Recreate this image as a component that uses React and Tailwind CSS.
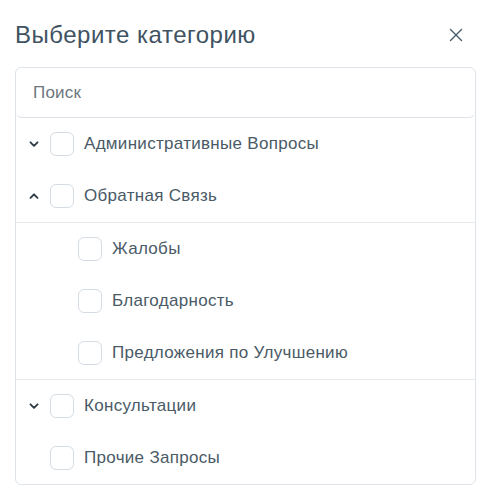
import { useState } from 'react';

const categories = [
  { id: 'admin', label: 'Административные Вопросы', children: [] , collapsible: true },
  {
    id: 'feedback',
    label: 'Обратная Связь',
    collapsible: true,
    children: ['Жалобы', 'Благодарность', 'Предложения по Улучшению'],
  },
  { id: 'consult', label: 'Консультации', children: [], collapsible: true },
  { id: 'other', label: 'Прочие Запросы', children: [], collapsible: false },
];

function Chevron({ up }) {
  return (
    <svg width="10" height="10" viewBox="0 0 10 10" className="text-[#2f3b45]">
      <path
        d={up ? 'M1.5 6.8 L5 3.3 L8.5 6.8' : 'M1.5 3.3 L5 6.8 L8.5 3.3'}
        fill="none"
        stroke="currentColor"
        strokeWidth="1.9"
        strokeLinecap="round"
        strokeLinejoin="round"
      />
    </svg>
  );
}

function Box() {
  return <span className="block w-6 h-6 shrink-0 rounded-[6px] border border-[#d5dce3] bg-white" />;
}

export default function App() {
  const [open] = useState({ feedback: true });

  return (
    <div className="w-[491px] h-[502px] bg-white" style={{ fontFamily: '"Liberation Sans", Arial, sans-serif' }}>
      <div className="flex items-center justify-between pl-[15px] pr-[28px] pt-[3px] h-[67px]">
        <h2 className="text-[24px] tracking-[0.5px] text-[#3f5362] leading-none">Выберите категорию</h2>
        <svg width="14" height="14" viewBox="0 0 14 14" className="text-[#4a5c6a]">
          <path d="M1.5 1.5 L12.5 12.5 M12.5 1.5 L1.5 12.5" stroke="currentColor" strokeWidth="1.4" strokeLinecap="round" />
        </svg>
      </div>

      <div className="mx-[15px] rounded-[6px] border border-[#dde3e9] overflow-hidden">
        <div className="h-[50px] rounded-[6px] border-b border-[#dde3e9] flex items-center px-[17px]">
          <span className="text-[17px] tracking-[0.2px] text-[#6c7780]">Поиск</span>
        </div>

        {categories.map((cat) => {
          const isOpen = open[cat.id];
          return (
            <div key={cat.id}>
              <div className="h-[52px] flex items-center pl-[13px]">
                <span className="w-[10px] flex justify-center">
                  {cat.collapsible && <Chevron up={isOpen} />}
                </span>
                <span className="ml-[11px]"><Box /></span>
                <span className="ml-[10px] text-[17px] tracking-[0.3px] text-[#4a5a66]">{cat.label}</span>
              </div>
              {isOpen && cat.children.length > 0 && (
                <div className="border-y border-[#e6eaee]">
                  {cat.children.map((child) => (
                    <div key={child} className="h-[52px] flex items-center pl-[62px]">
                      <Box />
                      <span className="ml-[10px] text-[17px] tracking-[0.3px] text-[#4a5a66]">{child}</span>
                    </div>
                  ))}
                </div>
              )}
            </div>
          );
        })}
      </div>
    </div>
  );
}
